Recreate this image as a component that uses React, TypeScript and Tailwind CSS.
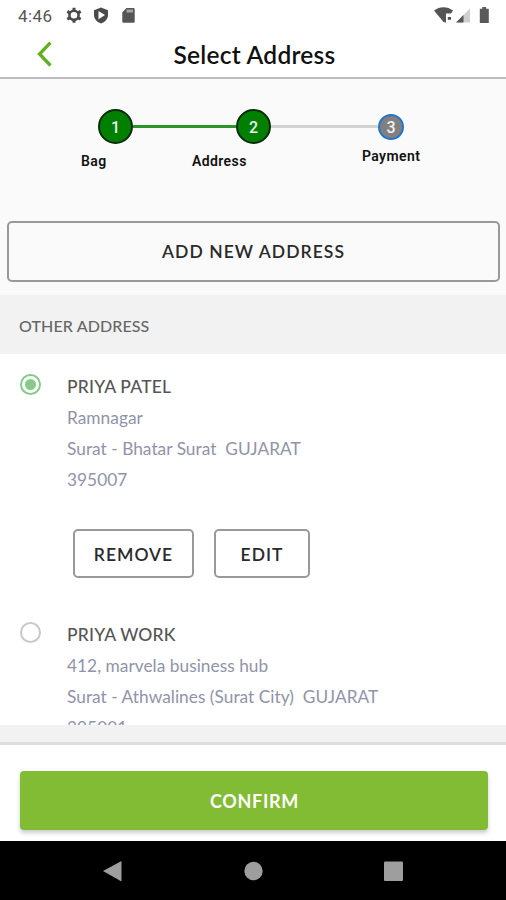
import type { ReactNode } from "react";
import clsx from "clsx";

interface Address {
  name: string;
  lines: string[];
  selected: boolean;
}

const addresses: Address[] = [
  {
    name: "PRIYA PATEL",
    lines: ["Ramnagar", "Surat - Bhatar Surat  GUJARAT", "395007"],
    selected: true,
  },
  {
    name: "PRIYA WORK",
    lines: ["412, marvela business hub", "Surat - Athwalines (Surat City)  GUJARAT", "395001"],
    selected: false,
  },
];

export default function App() {
  return (
    <div className="flex h-[900px] w-[506px] flex-col overflow-hidden bg-white font-[Lato,sans-serif]">
      <StatusBar />
      <Header />
      <div className="flex h-[216px] shrink-0 flex-col bg-[#fafafa]">
        <Stepper />
        <div className="px-[7px]">
          <OutlineButton className="h-[61px] w-[493px] text-[17.5px] tracking-[1.05px]">
            ADD NEW ADDRESS
          </OutlineButton>
        </div>
      </div>
      <h2 className="h-[59px] shrink-0 bg-[#f2f2f2] pl-[19px] text-[16px] leading-[62px] font-medium tracking-[0.12px] text-[#666]">
        OTHER ADDRESS
      </h2>
      <main className="h-[371px] shrink-0 overflow-hidden">
        {addresses.map((address) => (
          <AddressRow key={address.name} address={address} />
        ))}
      </main>
      <div className="h-[20px] shrink-0 border-b-[3px] border-[#dedede] bg-[#f2f2f2]" />
      <footer className="flex h-[96px] shrink-0 items-start pt-[26px] pl-5">
        <button className="h-[59px] w-[468px] rounded-[4px] bg-[#82bc34] pl-px text-[18px] leading-[60px] font-bold tracking-[0.7px] text-white shadow-[0_3px_4px_rgba(0,0,0,0.2)]">
          CONFIRM
        </button>
      </footer>
      <NavBar />
    </div>
  );
}

function StatusBar() {
  return (
    <div className="flex h-8 shrink-0 items-center pl-[18px] text-[#555]">
      <span className="w-[48px] font-[Roboto,sans-serif] text-[17px] leading-8 tracking-[0.4px]">4:46</span>
      <svg className="h-8 w-[80px]" viewBox="66 0 80 32" aria-hidden="true">
        <g fill="none" stroke="#4b4b4b">
          <circle cx="74" cy="15.3" r="4.600" strokeWidth="2.600" />
          <path
            d="M74 7.800v3M74 19.800v3M67.300 11.400l2.600 1.500M78.100 17.700l2.600 1.500M67.300 19.200l2.600-1.500M78.100 12.900l2.600-1.500"
            strokeWidth="3"
          />
        </g>
        <path d="M101 7.500l7 2.700v4.900c0 4-3 7.200-7 8.400-4-1.200-7-4.400-7-8.400v-4.900z" fill="#4b4b4b" />
        <path d="M98.500 11v8.200l6.500-4.100z" fill="#fff" />
        <path d="M126.500 8h6.800q1.400 0 1.400 1.400v12q0 1.400-1.400 1.400h-9.600q-1.400 0-1.400-1.400V12.200z" fill="#555" />
        <path d="M126.500 9.500h6.500v3h-6.500z" fill="#a5a5a5" />
      </svg>
      <svg className="ml-auto h-8 w-[76px]" viewBox="430 0 76 32" aria-hidden="true">
        <path d="M434 10.600C439.500 6 447.500 6 453 10.600L451 13.400H446V22.400L443.500 22z" fill="#555" />
        <path d="M447.800 17h3.200v2.800h-3.200z" fill="#555" />
        <path d="M470 8.500v14h-14z" fill="#cfcfcf" />
        <path d="M463.500 15v7.500H456z" fill="#555" />
        <path d="M482.300 7h3.800v1.700h2.700V23h-9V8.700h2.500z" fill="#5a5a5a" />
      </svg>
    </div>
  );
}

function Header() {
  return (
    <header className="flex h-[47px] shrink-0 border-b-2 border-[#bdbdbd]">
      <svg className="h-[45px] w-[60px]" viewBox="0 32 60 45" aria-hidden="true">
        <path d="M50.500 42.700L39.500 54l11 11.500" fill="none" stroke="#62b01e" strokeWidth="3.300" />
      </svg>
      <h1 className="w-[389px] text-center text-[24.5px] leading-[46px] font-semibold tracking-[0.25px] text-[#111]">
        Select Address
      </h1>
    </header>
  );
}

function Stepper() {
  return (
    <div className="h-[142px]">
      <div className="flex items-center pt-[30px] pl-[98px] font-[Roboto,sans-serif] font-medium text-[#f2f2f2]">
        <StepDot>1</StepDot>
        <div className="h-[3px] w-[103px] bg-[#2c962c]" />
        <StepDot>2</StepDot>
        <div className="h-[3px] w-[107px] bg-[#d3d3d3]" />
        <span className="size-[26px] rounded-full border-2 border-[#2474c8] bg-[#808080] text-center text-[16px] leading-[23px]">
          3
        </span>
      </div>
      <div className="flex pl-[81px] font-[Roboto,sans-serif] text-[14px] leading-4 font-semibold tracking-[0.4px] text-[#111]">
        <span className="mt-[9px] w-[111px]">Bag</span>
        <span className="mt-[9px] w-[170px]">Address</span>
        <span className="mt-[4px]">Payment</span>
      </div>
    </div>
  );
}

function StepDot({ children }: { children: ReactNode }) {
  return (
    <span className="size-[35px] rounded-full border-2 border-[#0b2b0b] bg-[#008000] text-center text-[16px] leading-[33px]">
      {children}
    </span>
  );
}

function OutlineButton({ className, children }: { className: string; children: ReactNode }) {
  return (
    <button
      className={clsx(
        "flex items-center justify-center rounded-[5px] border-2 border-[#999] pt-px font-semibold text-[#2a2a2a]",
        className,
      )}
    >
      {children}
    </button>
  );
}

function AddressRow({ address }: { address: Address }) {
  return (
    <article className="flex h-[248px] pl-5">
      <Radio selected={address.selected} />
      <div className="pt-[17px] text-[17.3px] leading-[31px] tracking-[0.03px] whitespace-pre text-[#9193a8]">
        <h3 className="text-[17.5px] font-medium tracking-[0.2px] text-[#555]">{address.name}</h3>
        {address.lines.map((line) => (
          <p key={line}>{line}</p>
        ))}
        {address.selected ? (
          <div className="mt-[34px] flex gap-5 pl-1.5">
            <OutlineButton className="h-[49px] w-[121px] text-[17.5px] tracking-[1px]">REMOVE</OutlineButton>
            <OutlineButton className="h-[49px] w-[96px] text-[17.5px] tracking-[1px]">EDIT</OutlineButton>
          </div>
        ) : null}
      </div>
    </article>
  );
}

function Radio({ selected }: { selected: boolean }) {
  return (
    <span
      className={clsx(
        "mt-5 mr-[26px] flex size-[21px] items-center justify-center rounded-full border-2",
        selected ? "border-[#85ca89]" : "border-[#c9c9c9]",
      )}
    >
      {selected ? <span className="size-[11px] rounded-full bg-[#85ca89]" /> : null}
    </span>
  );
}

function NavBar() {
  return (
    <nav className="h-[59px] shrink-0 bg-black">
      <svg className="h-[59px] w-[506px]" viewBox="0 841 506 59" fill="#9e9e9e" aria-hidden="true">
        <path d="M121.500 861v20.500L103 871z" />
        <circle cx="253.500" cy="871" r="9.200" />
        <rect x="384" y="861.500" width="19" height="19.500" rx="1" />
      </svg>
    </nav>
  );
}
